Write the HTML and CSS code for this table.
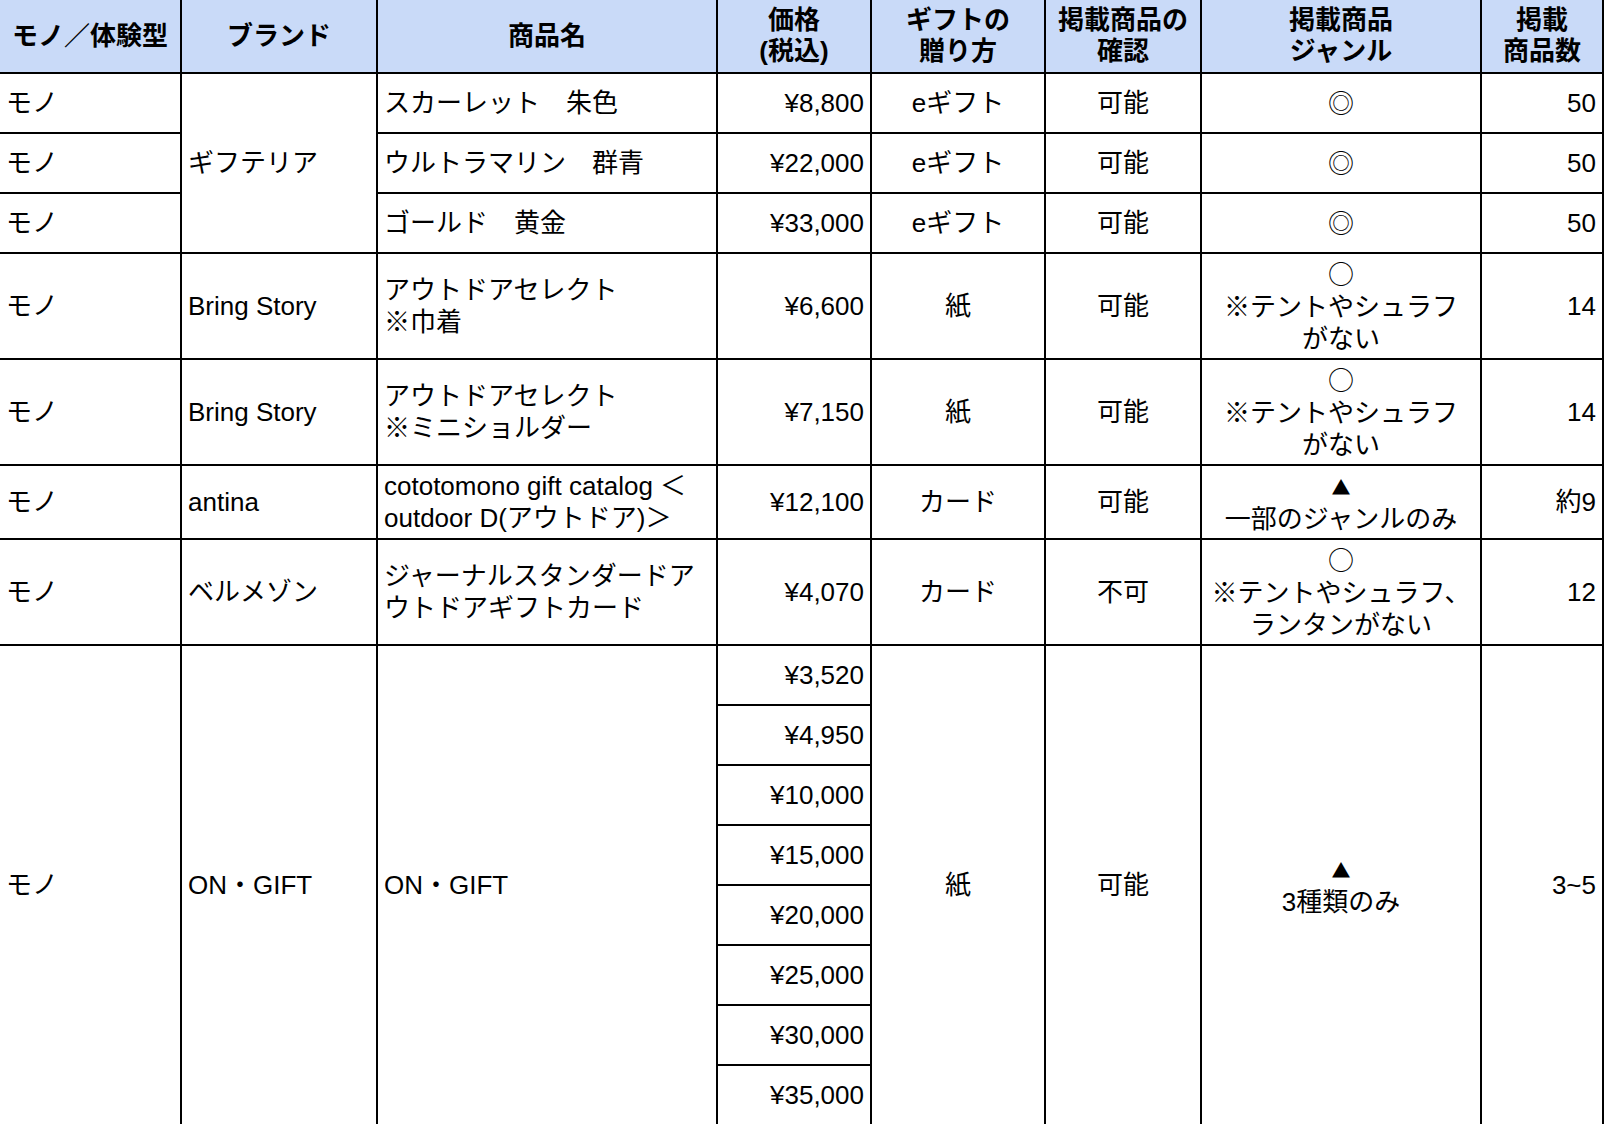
FILE: index.html
```html
<!DOCTYPE html>
<html lang="ja">
<head>
<meta charset="utf-8">
<title>ギフト比較表</title>
<link rel="stylesheet" href="styles.css">
</head>
<body>
<table class="gift-table">
  <colgroup>
    <col class="c-type">
    <col class="c-brand">
    <col class="c-name">
    <col class="c-price">
    <col class="c-method">
    <col class="c-check">
    <col class="c-genre">
    <col class="c-count">
  </colgroup>
  <thead>
    <tr class="r-head">
      <th>モノ／体験型</th>
      <th>ブランド</th>
      <th>商品名</th>
      <th>価格<br>(税込)</th>
      <th>ギフトの<br>贈り方</th>
      <th>掲載商品の<br>確認</th>
      <th>掲載商品<br>ジャンル</th>
      <th>掲載<br>商品数</th>
    </tr>
  </thead>
  <tbody>
    <tr class="r-1">
      <td class="left">モノ</td>
      <td class="left" rowspan="3">ギフテリア</td>
      <td class="left">スカーレット　朱色</td>
      <td class="right">¥8,800</td>
      <td class="center">eギフト</td>
      <td class="center">可能</td>
      <td class="center"><span class="sym">◎</span></td>
      <td class="right">50</td>
    </tr>
    <tr class="r-1">
      <td class="left">モノ</td>
      <td class="left">ウルトラマリン　群青</td>
      <td class="right">¥22,000</td>
      <td class="center">eギフト</td>
      <td class="center">可能</td>
      <td class="center"><span class="sym">◎</span></td>
      <td class="right">50</td>
    </tr>
    <tr class="r-1">
      <td class="left">モノ</td>
      <td class="left">ゴールド　黄金</td>
      <td class="right">¥33,000</td>
      <td class="center">eギフト</td>
      <td class="center">可能</td>
      <td class="center"><span class="sym">◎</span></td>
      <td class="right">50</td>
    </tr>
    <tr class="r-3">
      <td class="left">モノ</td>
      <td class="left">Bring Story</td>
      <td class="left">アウトドアセレクト<br>※巾着</td>
      <td class="right">¥6,600</td>
      <td class="center">紙</td>
      <td class="center">可能</td>
      <td class="center"><span class="sym">○</span><br>※テントやシュラフ<br>がない</td>
      <td class="right">14</td>
    </tr>
    <tr class="r-3">
      <td class="left">モノ</td>
      <td class="left">Bring Story</td>
      <td class="left">アウトドアセレクト<br>※ミニショルダー</td>
      <td class="right">¥7,150</td>
      <td class="center">紙</td>
      <td class="center">可能</td>
      <td class="center"><span class="sym">○</span><br>※テントやシュラフ<br>がない</td>
      <td class="right">14</td>
    </tr>
    <tr class="r-2">
      <td class="left">モノ</td>
      <td class="left">antina</td>
      <td class="left">cototomono gift catalog ＜<br>outdoor D(アウトドア)＞</td>
      <td class="right">¥12,100</td>
      <td class="center">カード</td>
      <td class="center">可能</td>
      <td class="center"><span class="tri">▲</span><br>一部のジャンルのみ</td>
      <td class="right">約9</td>
    </tr>
    <tr class="r-3">
      <td class="left">モノ</td>
      <td class="left">ベルメゾン</td>
      <td class="left">ジャーナルスタンダードア<br>ウトドアギフトカード</td>
      <td class="right">¥4,070</td>
      <td class="center">カード</td>
      <td class="center">不可</td>
      <td class="center"><span class="sym">○</span><br>※テントやシュラフ、<br>ランタンがない</td>
      <td class="right">12</td>
    </tr>
    <tr class="r-1">
      <td class="left" rowspan="8">モノ</td>
      <td class="left" rowspan="8">ON・GIFT</td>
      <td class="left" rowspan="8">ON・GIFT</td>
      <td class="right">¥3,520</td>
      <td class="center" rowspan="8">紙</td>
      <td class="center" rowspan="8">可能</td>
      <td class="center" rowspan="8"><span class="tri">▲</span><br>3種類のみ</td>
      <td class="right" rowspan="8">3~5</td>
    </tr>
    <tr class="r-1"><td class="right">¥4,950</td></tr>
    <tr class="r-1"><td class="right">¥10,000</td></tr>
    <tr class="r-1"><td class="right">¥15,000</td></tr>
    <tr class="r-1"><td class="right">¥20,000</td></tr>
    <tr class="r-1"><td class="right">¥25,000</td></tr>
    <tr class="r-1"><td class="right">¥30,000</td></tr>
    <tr class="r-1"><td class="right">¥35,000</td></tr>
  </tbody>
</table>
</body>
</html>
```

FILE: styles.css
```css
html, body {
  margin: 0;
  padding: 0;
  background: #ffffff;
}

body {
  font-family: "Liberation Sans", "Noto Sans CJK JP", sans-serif;
  font-size: 26px;
  color: #000000;
  overflow: hidden;
}

.gift-table {
  border-collapse: collapse;
  table-layout: fixed;
  width: 1603px;
}

.c-type { width: 181px; }
.c-brand { width: 196px; }
.c-name { width: 340px; }
.c-price { width: 154px; }
.c-method { width: 174px; }
.c-check { width: 156px; }
.c-genre { width: 280px; }
.c-count { width: 122px; }

.gift-table th,
.gift-table td {
  border: 2px solid #000000;
  padding: 0 6px;
  vertical-align: middle;
  overflow: hidden;
  white-space: nowrap;
}

.gift-table th {
  background: #c9daf8;
  font-weight: 700;
  text-align: center;
  line-height: 31px;
  border-top: none;
}

.gift-table td {
  line-height: 32px;
}

.gift-table tr > :first-child {
  border-left: none;
}

.r-head { height: 73px; }
.r-1 { height: 60px; }
.r-2 { height: 74px; }
.r-3 { height: 106px; }

.left { text-align: left; }
.right { text-align: right; }
.center { text-align: center; }

.sym {
  font-family: "Noto Sans CJK JP", sans-serif;
}

.tri {
  font-family: "Noto Sans CJK JP", sans-serif;
  font-size: 19px;
}
```
